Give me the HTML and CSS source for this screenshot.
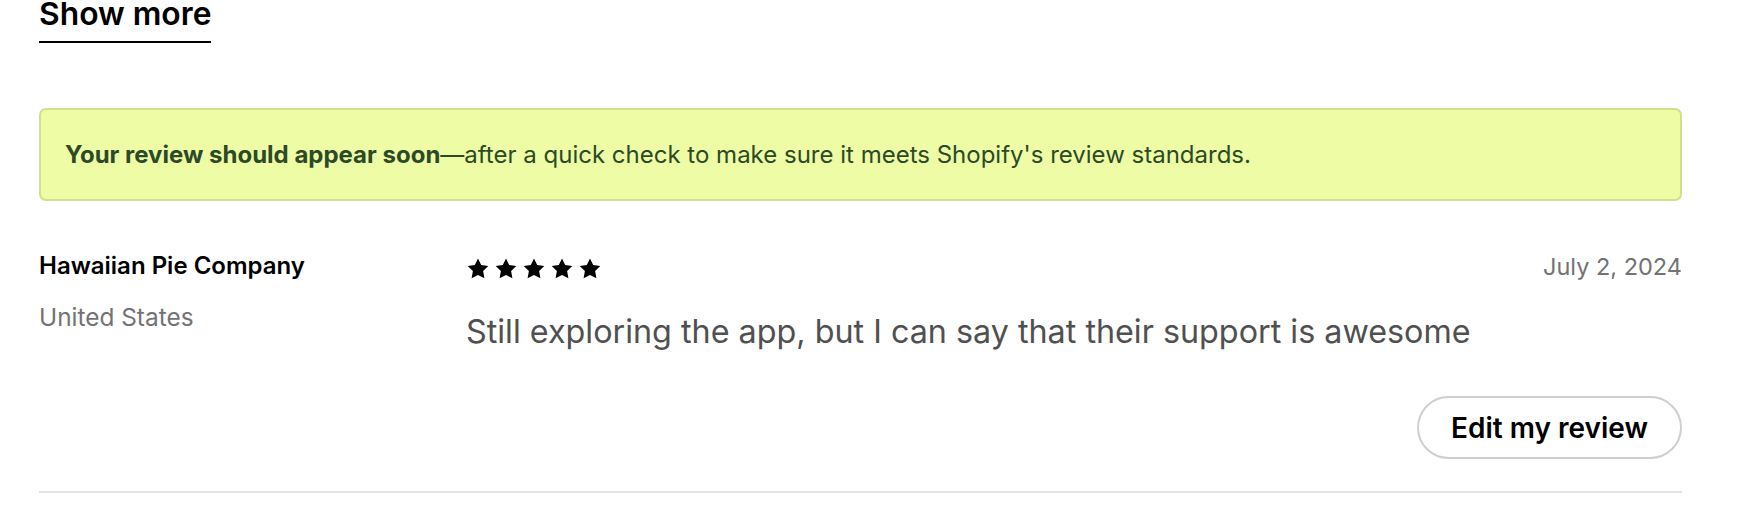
FILE: index.html
```html
<!DOCTYPE html>
<html lang="en">
<head>
<meta charset="utf-8">
<title>Reviews</title>
<link rel="stylesheet" href="styles.css">
</head>
<body>
<div class="page">
  <div class="show-more-wrap"><a class="show-more" href="#">Show more</a></div>
  <div class="notice"><strong>Your review should appear soon</strong>—after a quick check to make sure it meets Shopify's review standards.</div>
  <div class="review">
    <div class="reviewer">
      <div class="name">Hawaiian Pie Company</div>
      <div class="country">United States</div>
    </div>
    <div class="body">
      <div class="meta">
        <div class="stars">
          <svg viewBox="0 0 24 24"><path d="M12 1.6l3.2 6.5 7.1 1-5.2 5 1.3 7.1L12 17.9l-6.4 3.3 1.3-7.1-5.2-5 7.1-1z"/></svg>
          <svg viewBox="0 0 24 24"><path d="M12 1.6l3.2 6.5 7.1 1-5.2 5 1.3 7.1L12 17.9l-6.4 3.3 1.3-7.1-5.2-5 7.1-1z"/></svg>
          <svg viewBox="0 0 24 24"><path d="M12 1.6l3.2 6.5 7.1 1-5.2 5 1.3 7.1L12 17.9l-6.4 3.3 1.3-7.1-5.2-5 7.1-1z"/></svg>
          <svg viewBox="0 0 24 24"><path d="M12 1.6l3.2 6.5 7.1 1-5.2 5 1.3 7.1L12 17.9l-6.4 3.3 1.3-7.1-5.2-5 7.1-1z"/></svg>
          <svg viewBox="0 0 24 24"><path d="M12 1.6l3.2 6.5 7.1 1-5.2 5 1.3 7.1L12 17.9l-6.4 3.3 1.3-7.1-5.2-5 7.1-1z"/></svg>
        </div>
        <div class="date">July 2, 2024</div>
      </div>
      <p class="text">Still exploring the app, but I can say that their support is awesome</p>
      <div class="actions"><button class="edit">Edit my review</button></div>
    </div>
  </div>
</div>
</body>
</html>
```

FILE: styles.css
```css
html, body {
  margin: 0;
  padding: 0;
  background: #ffffff;
}
body {
  font-family: Inter, "Noto Sans", sans-serif;
  color: #000;
}
.page {
  width: 1643px;
  margin-left: 39px;
}
.show-more-wrap {
  margin-top: -6px;
  height: 49px;
}
.show-more {
  display: inline-block;
  font-size: 31.8px;
  font-weight: 600;
  color: #000;
  text-decoration: none;
  line-height: 40px;
  padding-bottom: 7px;
  border-bottom: 2px solid #000;
}
.notice {
  margin-top: 65px;
  box-sizing: border-box;
  height: 93px;
  display: flex;
  align-items: center;
  padding: 0 24px;
  background: #eefca6;
  border: 2px solid #cfe28a;
  border-radius: 7px;
  font-size: 24px;
  color: #2c4a26;
}
.notice strong {
  font-weight: 700;
}
.review {
  display: flex;
  margin-top: 49px;
  padding-bottom: 32px;
  border-bottom: 2px solid #e3e3e3;
}
.reviewer {
  width: 427px;
  flex: none;
}
.name {
  font-size: 24px;
  font-weight: 600;
  line-height: 32px;
}
.country {
  margin-top: 19px;
  font-size: 24.4px;
  color: #737373;
  line-height: 32px;
}
.body {
  flex: 1;
}
.meta {
  display: flex;
  justify-content: space-between;
  align-items: center;
  height: 32px;
}
.stars {
  display: flex;
  gap: 4px;
  margin-top: 5px;
}
.stars svg {
  width: 24px;
  height: 24px;
  fill: #000;
}
.date {
  font-size: 23.5px;
  color: #737373;
}
.text {
  margin: 30px 0 0;
  font-size: 32.3px;
  line-height: 40px;
  color: #505050;
}
.actions {
  display: flex;
  justify-content: flex-end;
  margin-top: 44px;
}
.edit {
  height: 63px;
  padding: 0 32px;
  border: 2px solid #cfcfcf;
  border-radius: 32px;
  background: #fff;
  font-family: inherit;
  font-size: 28px;
  font-weight: 600;
  color: #000;
}
```
